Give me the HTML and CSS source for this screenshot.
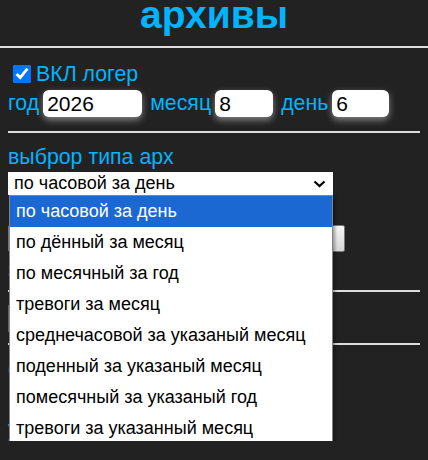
FILE: index.html
```html
<!DOCTYPE html>
<html lang="ru">
<head>
    <meta charset="UTF-8">
    <meta name="viewport" content="width=device-width, initial-scale=1.0">
    <title>архивы</title>
    <link rel="stylesheet" href="styles.css">
</head>
<body>
    <header class="top">
        <h1>архивы</h1>
    </header>

    <div class="panel">
        <label class="logger">
            <input type="checkbox" checked> ВКЛ логер
        </label>

        <div class="date-row">
            <label class="field">год <input type="text" class="year" value="2026"></label>
            <label class="field">месяц <input type="text" class="month" value="8"></label>
            <label class="field">день <input type="text" class="day" value="6"></label>
        </div>

        <div class="rule"></div>

        <div class="type-label">выброр типа арх</div>
        <div class="select-wrap">
            <div class="select">
                <span>по часовой за день</span>
                <svg width="13" height="8" viewBox="0 0 13 8"><path d="M1.5 1.5 L6.5 6 L11.5 1.5" fill="none" stroke="#000" stroke-width="2.2"/></svg>
            </div>
            <!-- открытый список типов архива -->
            <ul class="options">
                <li class="active">по часовой за день</li>
                <li>по дённый за месяц</li>
                <li>по месячный за год</li>
                <li>тревоги за месяц</li>
                <li>среднечасовой за указаный месяц</li>
                <li>поденный за указаный месяц</li>
                <li>помесячный за указаный год</li>
                <li>тревоги за указанный месяц</li>
            </ul>
        </div>

        <button class="read-btn">прочитать архив</button>
        <div class="note">записей: 0</div>

        <div class="rule rule-low"></div>
        <div class="file-box"></div>
        <div class="rule rule-file"></div>

        <div class="note note-gap">файл архива</div>
        <div class="note note-last">удалить архив</div>
    </div>
</body>
</html>
```

FILE: styles.css
```css
body {
    margin: 0;
    background-color: #222;
    font-family: "Liberation Sans", Arial, sans-serif;
    color: #00b4ff;
}

.top {
    text-align: center;
    border-bottom: 2px solid #ddd;
}

.top h1 {
    margin: 0;
    font-size: 39px;
    line-height: 28px;
    padding-top: 1px;
    padding-bottom: 17px;
}

.panel {
    padding: 0 8px;
}

.logger {
    display: flex;
    align-items: center;
    height: 24px;
    margin-top: 14px;
    font-size: 21.33px;
}

.logger input {
    width: 18px;
    height: 18px;
    margin: 0 5px;
}

.date-row {
    display: flex;
    align-items: center;
    gap: 8px;
    margin-top: 4px;
    font-size: 21.33px;
}

.field {
    display: flex;
    align-items: center;
    gap: 4px;
}

.field input {
    box-sizing: border-box;
    height: 27px;
    border: 0;
    border-radius: 6px;
    padding: 0 4px;
    font-family: "Liberation Sans", Arial, sans-serif;
    font-size: 21px;
    color: #000;
    background: #fff;
    box-shadow: 0 3px 7px rgba(255, 255, 255, 0.45);
}

.year {
    width: 99px;
}

.month {
    width: 58px;
}

.day {
    width: 57px;
}

.rule {
    height: 2px;
    background: #ddd;
    margin-top: 14px;
}

.type-label {
    margin-top: 12px;
    font-size: 21.33px;
    line-height: 24px;
}

.select-wrap {
    position: relative;
    width: 325px;
    margin-top: 3px;
}

.select {
    display: flex;
    align-items: center;
    justify-content: space-between;
    height: 23px;
    padding: 0 7px 0 6px;
    background: #fff;
    color: #000;
    font-size: 18px;
}

.options {
    position: absolute;
    top: 23px;
    left: 1px;
    z-index: 2;
    box-sizing: border-box;
    width: 324px;
    margin: 0;
    padding: 0;
    list-style: none;
    background: #fff;
    border: 1px solid #858585;
    box-shadow: 2px 2px 3px rgba(0, 0, 0, 0.35);
}

.options li {
    height: 31px;
    line-height: 31px;
    padding-left: 6px;
    color: #000;
    font-size: 18px;
}

.options .active {
    background: #1b68d3;
    color: #fff;
}

.read-btn {
    display: block;
    width: 337px;
    height: 27px;
    margin-top: 30px;
    border: 1px solid #777;
    border-radius: 2px;
    background: linear-gradient(#f6f6f6, #d6d6d6);
    font-size: 16px;
}

.note {
    font-size: 21.33px;
    line-height: 24px;
    margin-top: 6px;
}

.rule-low {
    margin-top: 8px;
}

.file-box {
    width: 300px;
    height: 25px;
    margin-top: 13px;
    border: 1px solid #666;
    background: #2a2a2a;
}

.rule-file {
    margin-top: 11px;
}

.note-gap {
    margin-top: 12px;
}

.note-last {
    margin-top: 36px;
}
```
